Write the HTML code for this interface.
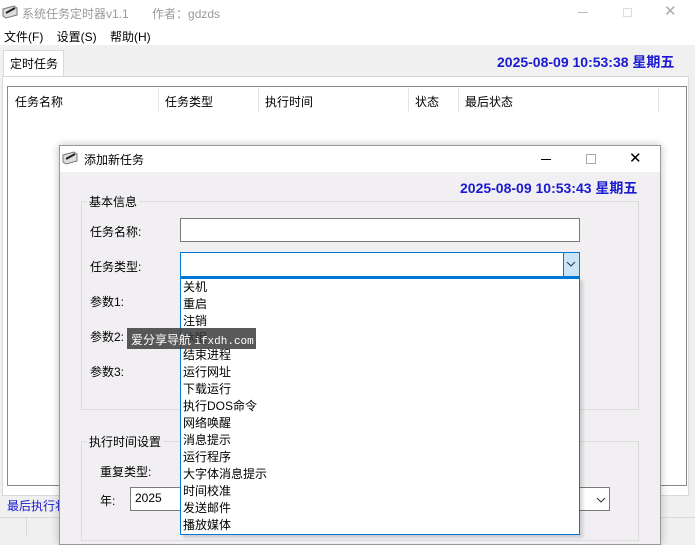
<!DOCTYPE html>
<html><head><meta charset="utf-8"><style>
*{margin:0;padding:0;box-sizing:border-box}
body{width:695px;height:537px;overflow:hidden;position:relative;background:#f0f0f0;font-family:"Liberation Sans","Microsoft YaHei","Noto Sans CJK SC",sans-serif;font-size:12px;color:#000}
.a{position:absolute;white-space:nowrap}
</style></head><body>
<div class="a" style="left:0;top:0;width:695px;height:24px;background:#fff"></div>
<svg class="a" style="left:2px;top:5px" width="16" height="14" viewBox="0 0 16 14"><path d="M1 4 L12 1 L15 3 L15 10 L4 13 L1 11Z" fill="#ddd" stroke="#777"/><path d="M4 8 L13 3" stroke="#222" stroke-width="2"/></svg>
<div class="a" style="left:22px;top:5px;color:#999;font-size:12px">系统任务定时器v1.1&nbsp;&nbsp;&nbsp;&nbsp;&nbsp;&nbsp;&nbsp;作者：gdzds</div>
<div class="a" style="left:578px;top:12px;width:10px;height:1px;background:#bbb"></div>
<div class="a" style="left:623px;top:8px;width:9px;height:9px;border:1px solid #ddd"></div>
<div class="a" style="left:664px;top:2px;color:#aaa;font-size:15px">✕</div>
<div class="a" style="left:0;top:24px;width:695px;height:21px;background:#fff"></div>
<div class="a" style="left:4px;top:28px">文件(F)&nbsp;&nbsp;&nbsp;&nbsp;设置(S)&nbsp;&nbsp;&nbsp;&nbsp;帮助(H)</div>
<div class="a" style="left:3px;top:50px;width:61px;height:27px;background:#fff;border:1px solid #d9d9d9;border-bottom:none"></div>
<div class="a" style="left:10px;top:55px">定时任务</div>
<div class="a" style="left:2px;top:76px;width:687px;height:420px;background:#fff;border:1px solid #d9d9d9"></div>
<div class="a" style="left:497px;top:52px;color:#1a1ad0;font-weight:bold;font-size:14px">2025-08-09 10:53:38 星期五</div>
<div class="a" style="left:7px;top:86px;width:680px;height:400px;border:1px solid #888;background:#fff"></div>
<div class="a" style="left:15px;top:93px">任务名称</div>
<div class="a" style="left:158px;top:88px;width:1px;height:24px;background:#e5e5e5"></div>
<div class="a" style="left:165px;top:93px">任务类型</div>
<div class="a" style="left:258px;top:88px;width:1px;height:24px;background:#e5e5e5"></div>
<div class="a" style="left:265px;top:93px">执行时间</div>
<div class="a" style="left:408px;top:88px;width:1px;height:24px;background:#e5e5e5"></div>
<div class="a" style="left:415px;top:93px">状态</div>
<div class="a" style="left:458px;top:88px;width:1px;height:24px;background:#e5e5e5"></div>
<div class="a" style="left:465px;top:93px">最后状态</div>
<div class="a" style="left:658px;top:88px;width:1px;height:24px;background:#e5e5e5"></div>
<div class="a" style="left:7px;top:497px;color:#1a1ad0">最后执行状态</div>
<div class="a" style="left:0;top:517px;width:695px;height:1px;background:#d9d9d9"></div>
<div class="a" style="left:26px;top:517px;width:1px;height:20px;background:#d9d9d9"></div>
<div class="a" style="left:59px;top:145px;width:602px;height:400px;background:#f1eff2;border:1px solid #999;box-shadow:0 0 8px rgba(0,0,0,.25)"></div>
<div class="a" style="left:60px;top:146px;width:600px;height:26px;background:#fff"></div>
<svg class="a" style="left:62px;top:151px" width="16" height="14" viewBox="0 0 16 14"><path d="M1 4 L12 1 L15 3 L15 10 L4 13 L1 11Z" fill="#ddd" stroke="#777"/><path d="M4 8 L13 3" stroke="#222" stroke-width="2"/></svg>
<div class="a" style="left:84px;top:151px">添加新任务</div>
<div class="a" style="left:541px;top:159px;width:10px;height:1px;background:#000"></div>
<div class="a" style="left:586px;top:154px;width:10px;height:10px;border:1px solid #aaa"></div>
<div class="a" style="left:629px;top:149px;font-size:15px">✕</div>
<div class="a" style="left:460px;top:178px;color:#1a1ad0;font-weight:bold;font-size:14px">2025-08-09 10:53:43 星期五</div>
<div class="a" style="left:81px;top:201px;width:558px;height:209px;border:1px solid #dcdcdc"></div>
<div class="a" style="left:87px;top:193px;background:#f1eff2;padding:0 2px">基本信息</div>
<div class="a" style="left:90px;top:223px">任务名称:</div>
<div class="a" style="left:180px;top:218px;width:400px;height:24px;background:#fff;border:1px solid #7a7a7a"></div>
<div class="a" style="left:90px;top:258px">任务类型:</div>
<div class="a" style="left:180px;top:252px;width:400px;height:25px;background:#fff;border:1px solid #0078d7"></div>
<div class="a" style="left:563px;top:253px;width:16px;height:23px;background:#cce4f7;border-left:1px solid #0078d7"></div>
<svg class="a" style="left:566px;top:261px" width="10" height="6"><path d="M1 1 L5 5 L9 1" fill="none" stroke="#333"/></svg>
<div class="a" style="left:90px;top:293px">参数1:</div>
<div class="a" style="left:90px;top:328px">参数2:</div>
<div class="a" style="left:90px;top:363px">参数3:</div>
<div class="a" style="left:81px;top:441px;width:558px;height:100px;border:1px solid #dcdcdc"></div>
<div class="a" style="left:87px;top:433px;background:#f1eff2;padding:0 2px">执行时间设置</div>
<div class="a" style="left:100px;top:463px">重复类型:</div>
<div class="a" style="left:100px;top:492px">年:</div>
<div class="a" style="left:130px;top:487px;width:480px;height:24px;background:#fff;border:1px solid #7a7a7a"></div>
<div class="a" style="left:135px;top:491px">2025</div>
<svg class="a" style="left:596px;top:497px" width="10" height="6"><path d="M1 1 L5 5 L9 1" fill="none" stroke="#333"/></svg>
<div class="a" style="left:180px;top:277px;width:400px;height:258px;background:#fff;border:1px solid #0078d7;border-top:2px solid #0078d7;box-shadow:3px 3px 3px rgba(0,0,0,.15)"></div>
<div class="a" style="left:183px;top:279px;line-height:17px">关机<br>重启<br>注销<br>休眠<br>结束进程<br>运行网址<br>下载运行<br>执行DOS命令<br>网络唤醒<br>消息提示<br>运行程序<br>大字体消息提示<br>时间校准<br>发送邮件<br>播放媒体</div>
<div class="a" style="left:127px;top:328px;width:129px;height:21px;background:rgba(60,60,60,.85)"></div>
<div class="a" style="left:131px;top:331px;color:#fff;font-size:12px">爱分享导航 <span style="font-family:'Liberation Mono',monospace;font-size:11px">ifxdh.com</span></div>
</body></html>
